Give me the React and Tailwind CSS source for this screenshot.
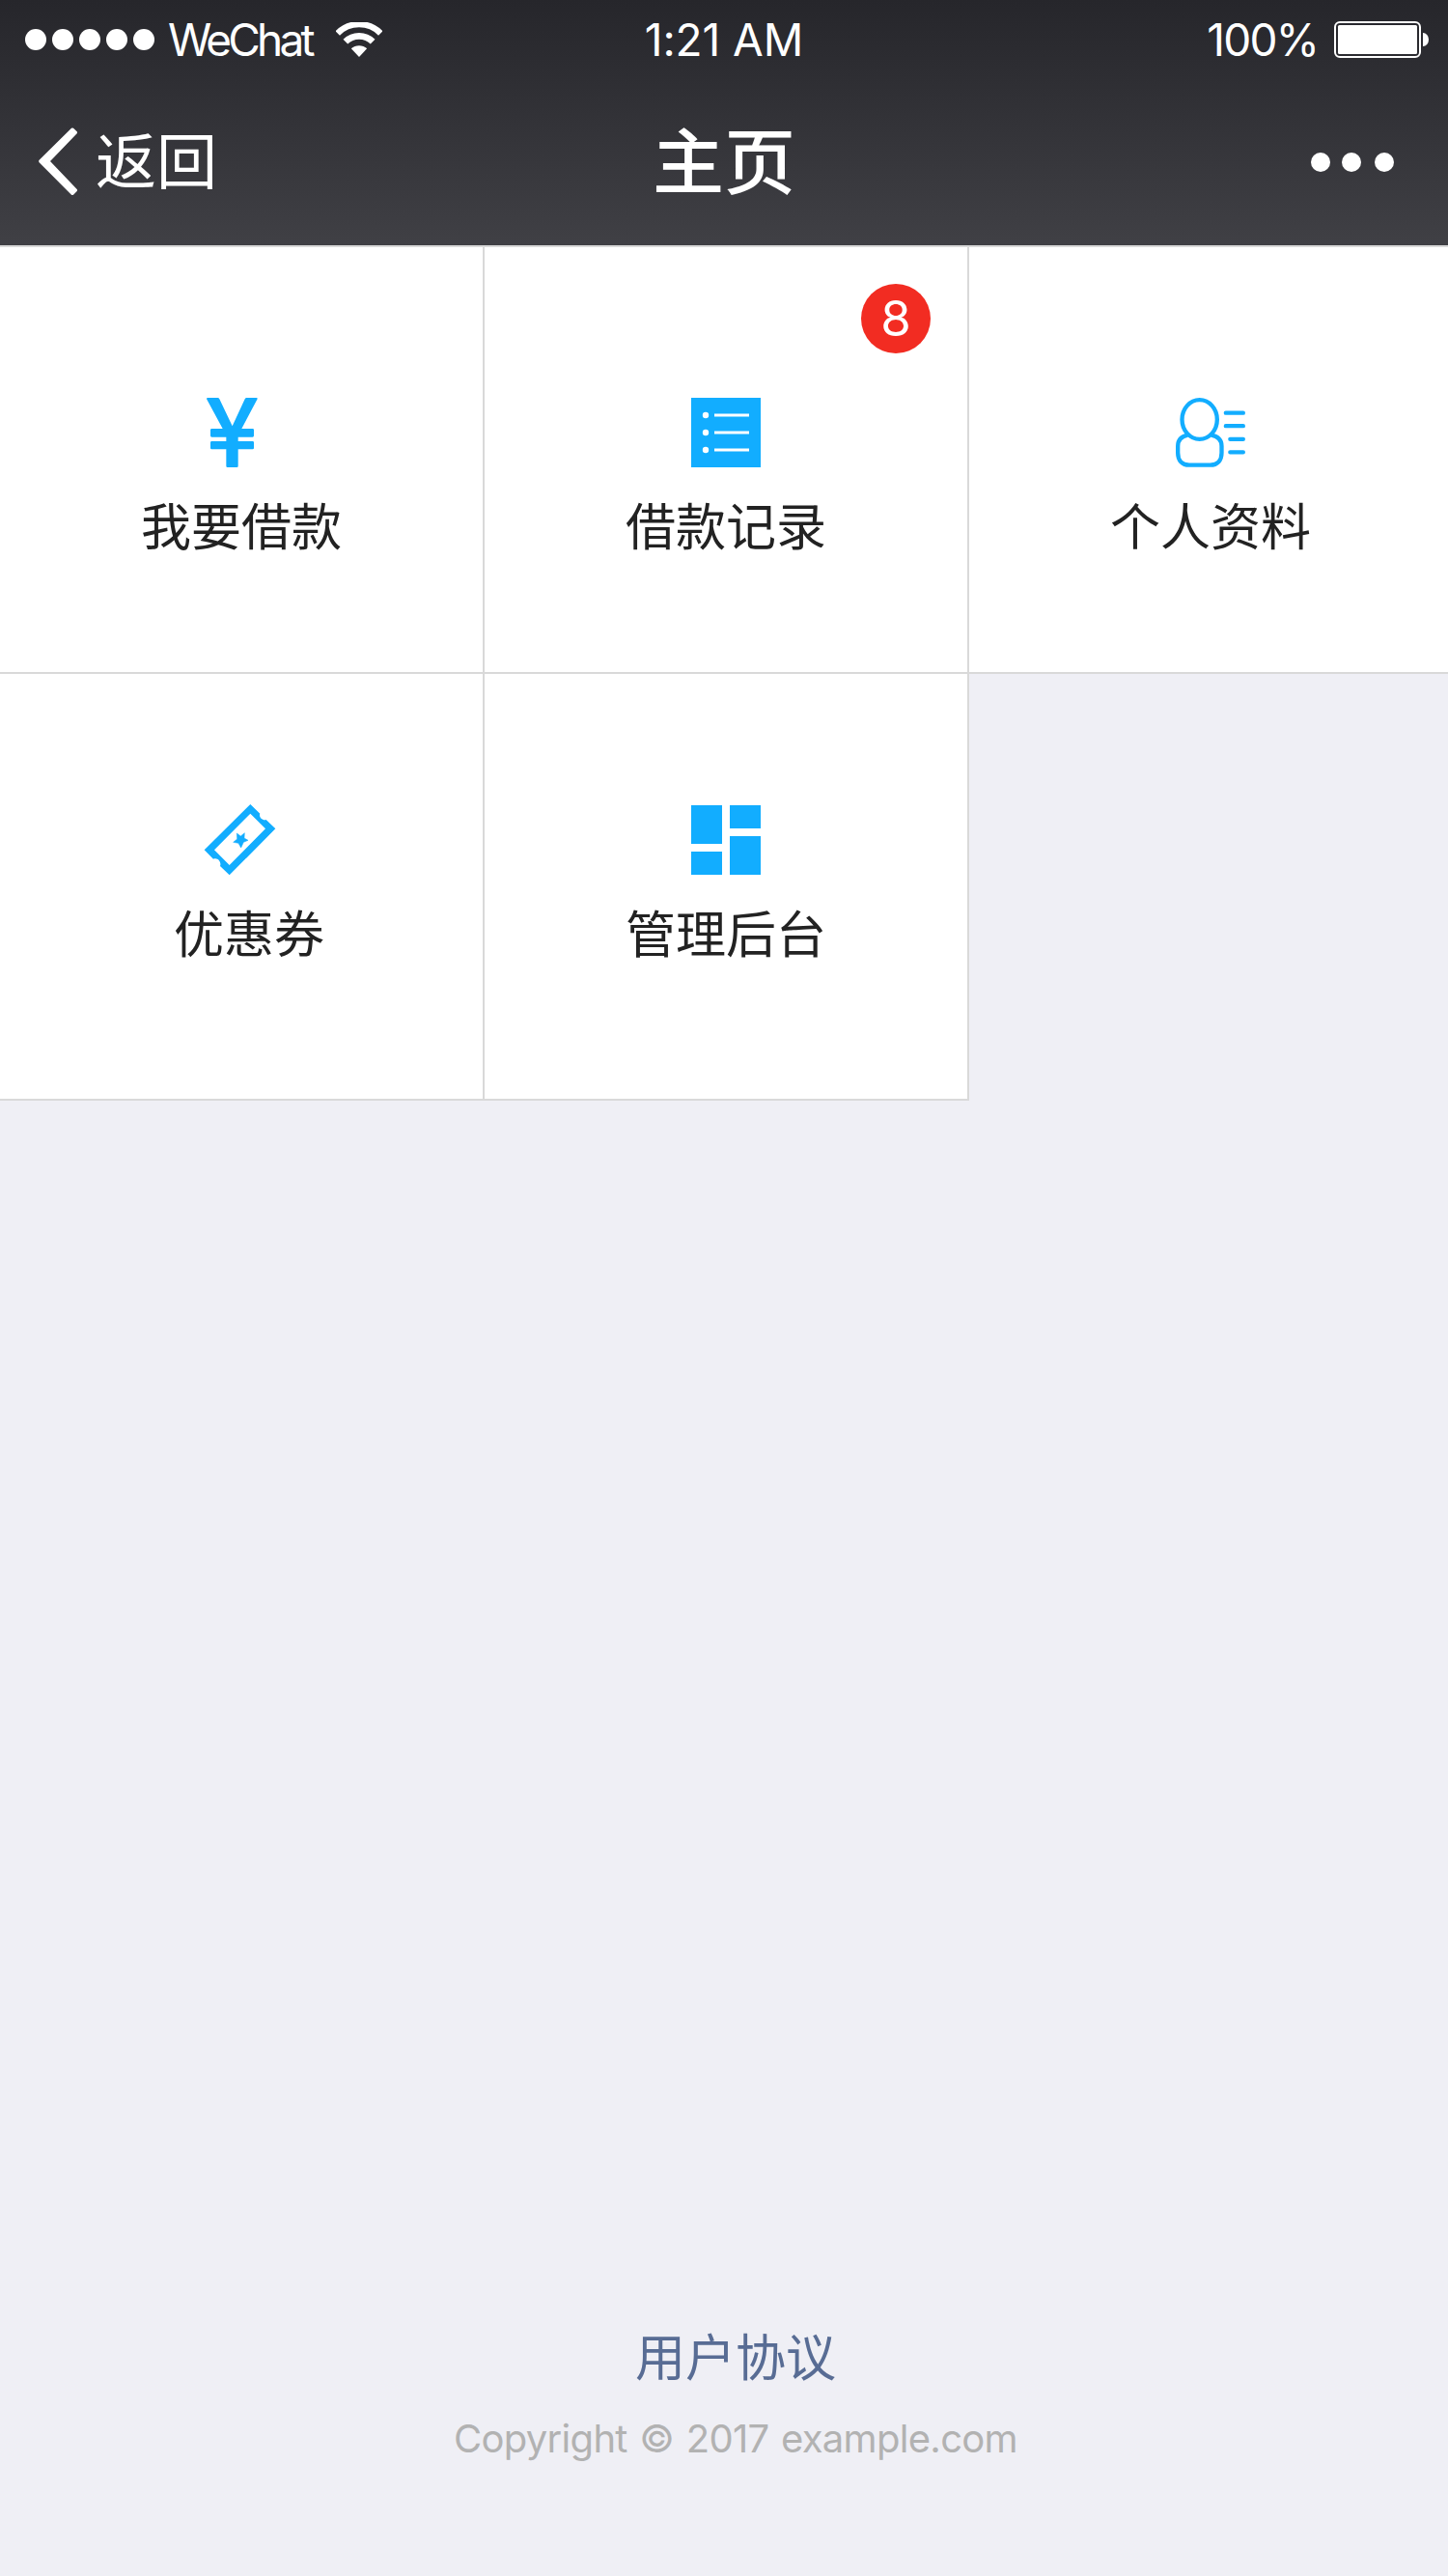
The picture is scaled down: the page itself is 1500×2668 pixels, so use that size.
const WifiIcon = () => (
  <svg viewBox="1044 72 144 108" className="ml-[25px] h-[36px] w-[48px]" fill="none">
    <path d="M1049.2 106.2A94.5 94.5 0 0 1 1182.8 106.2" stroke="white" strokeWidth="19" />
    <path d="M1073.6 132.5A60 60 0 0 1 1158.4 132.5" stroke="white" strokeWidth="20" />
    <path d="M1116 180L1091.5 154A36 36 0 0 1 1140.5 154Z" fill="white" />
  </svg>
);

const BatteryIcon = () => (
  <svg viewBox="0 0 98 38" className="h-[38px] w-[98px]" fill="none">
    <rect x="1" y="1" width="88" height="36" rx="5" stroke="white" strokeWidth="2" />
    <rect x="4" y="4" width="82" height="30" rx="1.5" fill="white" />
    <path d="M92 12A6 7 0 0 1 92 26Z" fill="white" />
  </svg>
);

const YenIcon = () => (
  <svg viewBox="252 66 216 216" className="size-[72px]" fill="#12adff">
    <path d="M256 66H287Q290 66 292 70L332 154L371 70Q373 66 376 66H407Q412 66 409 71L361 162H395Q399 162 399 166V184Q399 188 395 188H350V201H395Q399 201 399 205V222Q399 226 395 226H350V278Q350 282 346 282H317Q313 282 313 278V226H268Q264 226 264 222V205Q264 201 268 201H313V188H268Q264 188 264 184V166Q264 162 268 162H302L253 71Q250 66 256 66Z" />
  </svg>
);

const ListIcon = () => (
  <svg viewBox="0 0 72 72" className="size-[72px]">
    <path d="M0 0H72V72H0Z" fill="#12adff" />
    <g fill="white">
      <circle cx="15" cy="18" r="3.2" />
      <circle cx="15" cy="36" r="3.2" />
      <circle cx="15" cy="54" r="3.2" />
      <path d="M24 16.5H60V19.5H24ZM24 34.5H60V37.5H24ZM24 52.5H60V55.5H24Z" />
    </g>
  </svg>
);

const ProfileIcon = () => (
  <svg viewBox="264 66 216 216" className="size-[72px]" fill="none" stroke="#12adff" strokeWidth="13" strokeLinecap="round">
    <ellipse cx="338" cy="133.500" rx="54.500" ry="61" />
    <path d="M301 182C282 186 270.500 197 270.500 216V237C270.500 260 283 275 306 275H371C394 275 406.500 260 406.500 237V216C406.500 197 394 186 375 182" strokeLinecap="butt" />
    <path d="M419.500 113H473.500M419.500 153.500H473.500M433 194.500H473.500M433 235H473.500" />
  </svg>
);

const CouponIcon = () => (
  <svg viewBox="162 72 216 216" className="size-[72px] overflow-visible" fill="#12adff">
    <path
      fillRule="evenodd"
      d="M298 69L328 98C323 108 336 121 347 117L376 145L233 289L204 261C209 249 197 233 183 239L155 211ZM298 98L186 211L233 258L345 145Z"
    />
    <path
      d="M256 159L268 168L280 158L279 174L291 181L277 187L269 204L261 190L245 187L257 177Z"
      stroke="#12adff"
      strokeWidth="1.5"
      strokeLinejoin="round"
    />
  </svg>
);

const DashboardIcon = () => (
  <svg viewBox="0 0 72 72" className="size-[72px]" fill="#12adff">
    <path d="M0 0H32V40H0ZM40 0H72V24H40ZM0 48H32V72H0ZM40 32H72V72H40Z" />
  </svg>
);

const rows = [
  [
    { label: "我要借款", Icon: YenIcon },
    { label: "借款记录", Icon: ListIcon, badge: 8 },
    { label: "个人资料", Icon: ProfileIcon },
  ],
  [
    { label: "优惠券", Icon: CouponIcon, labelInset: "pl-[16px]" },
    { label: "管理后台", Icon: DashboardIcon },
  ],
];

const Cell = ({ label, Icon, badge, top, labelInset = "" }) => (
  <div className={`relative flex h-[442px] w-[502px] shrink-0 flex-col items-center border-r-2 border-b-2 border-[#d9d9d9] bg-white ${top}`}>
    <Icon />
    <span className={`mt-[25px] text-[52px] leading-[76px] font-normal text-[#222] ${labelInset}`}>{label}</span>
    {badge && (
      <span className="absolute top-[38px] right-[38px] flex size-[72px] items-center justify-center rounded-full bg-[#f22c22] font-[Inter] text-[51px] leading-[72px] font-normal text-white">
        {badge}
      </span>
    )}
  </div>
);

export default function App() {
  return (
    <div className="flex h-[2668px] w-[1500px] flex-col overflow-hidden bg-[#efeff5] font-['Inter','Noto_Sans_CJK_SC',sans-serif]">
      <header className="h-[254px] shrink-0 bg-linear-to-b from-[#26262b] to-[#404045] text-white">
        <div className="grid h-[82px] grid-cols-[1fr_auto_1fr] items-center px-[20px] text-[46px] leading-[82px]">
          <div className="flex items-center pl-[6px]">
            <div className="flex gap-[6px]">
              {[0, 1, 2, 3, 4].map((i) => (
                <i key={i} className="size-[22px] rounded-full bg-white" />
              ))}
            </div>
            <span className="ml-[14px] tracking-[-3.8px]">WeChat</span>
            <WifiIcon />
          </div>
          <span className="tracking-[-0.1px]">1:21 AM</span>
          <div className="flex items-center justify-end gap-[17px]">
            <span className="tracking-[-1.8px]">100%</span>
            <BatteryIcon />
          </div>
        </div>
        <nav className="grid h-[172px] grid-cols-[1fr_auto_1fr] items-start px-[40px]">
          <div className="flex items-center pt-[38px]">
            <svg viewBox="0 0 40 70" className="h-[70px] w-[40px]" fill="white">
              <path d="M34 .8Q35 0 36 .8L39.700 4.300Q40.500 5.300 39.700 6.300L12 35L39.700 64Q40.500 65 39.700 66L36 69.700Q35 70.500 34 69.700L.6 36.200Q-.3 35 .6 33.800Z" />
            </svg>
            <span className="ml-[19px] text-[63px] leading-[94px] font-normal">返回</span>
          </div>
          <h1 className="pt-[34px] text-[74px] leading-[104px] font-medium">主页</h1>
          <div className="flex justify-end pt-[76px] pr-[16px]">
            <i className="size-[20px] rounded-full bg-white" />
            <i className="ml-[12px] size-[20px] rounded-full bg-white" />
            <i className="ml-[14px] size-[20px] rounded-full bg-white" />
          </div>
        </nav>
      </header>
      <main className="border-t-2 border-[#d9d9d9]">
        {rows.map((row, r) => (
          <div key={r} className="flex">
            {row.map((item) => (
              <Cell key={item.label} {...item} top={r === 0 ? "pt-[156px]" : "pt-[136px]"} />
            ))}
          </div>
        ))}
      </main>
      <footer className="mt-auto flex flex-col items-center pb-[112px] pl-[24px]">
        <a className="text-[52px] leading-[76px] font-normal text-[#586c94]">用户协议</a>
        <p className="mt-[15px] text-[40px] leading-[60px] font-normal tracking-[-0.7px] [word-spacing:2px] text-[#b2b2b2]">Copyright © 2017 example.com</p>
      </footer>
    </div>
  );
}
